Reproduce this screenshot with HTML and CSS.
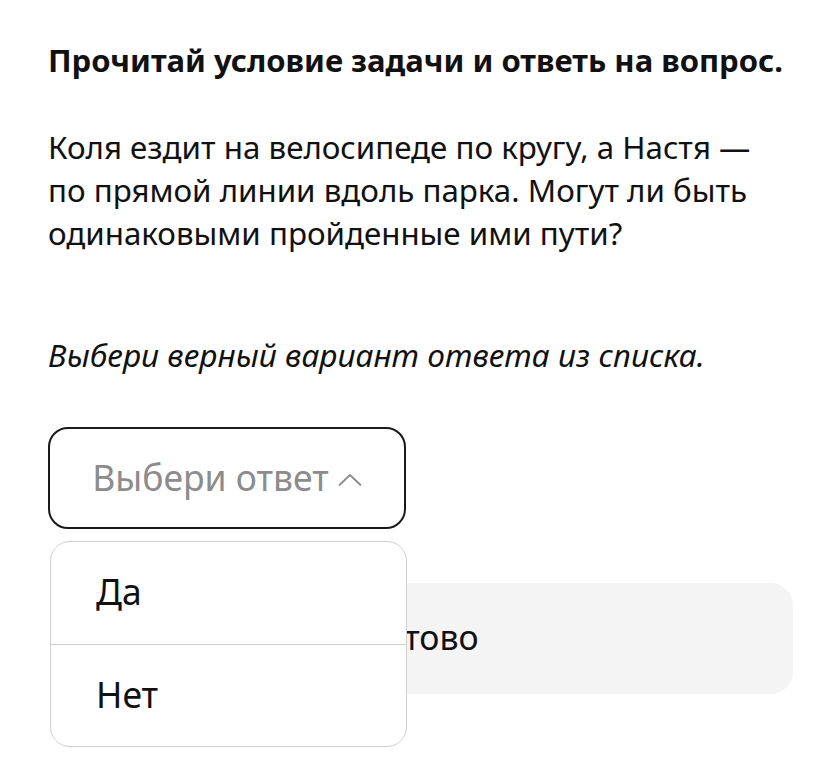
FILE: index.html
```html
<!DOCTYPE html>
<html lang="ru">
<head>
  <meta charset="UTF-8">
  <meta name="viewport" content="width=device-width, initial-scale=1.0">
  <title>Задача</title>
  <link rel="stylesheet" href="styles.css">
</head>
<body>
  <div class="task">
    <h1 class="task-title">Прочитай условие задачи и ответь на вопрос.</h1>

    <p class="task-text">Коля ездит на велосипеде по кругу, а Настя —<br>по прямой линии вдоль парка. Могут ли быть<br>одинаковыми пройденные ими пути?</p>

    <p class="task-hint">Выбери верный вариант ответа из списка.</p>

    <div class="answer">
      <div class="select-wrap">
        <button class="select-btn" type="button">
          <span class="select-label">Выбери ответ</span>
          <svg class="chevron" width="24" height="13" viewBox="0 0 24 13" fill="none">
            <path d="M1.5 12 L12 2 L22.5 12" stroke="#8c8c8c" stroke-width="1.8" stroke-linecap="round" stroke-linejoin="round"/>
          </svg>
        </button>

        <ul class="dropdown">
          <li class="dropdown-item">Да</li>
          <li class="dropdown-item">Нет</li>
        </ul>
      </div>

      <button class="done-btn" type="button">Готово</button>
    </div>
  </div>
</body>
</html>
```

FILE: styles.css
```css
* {
  box-sizing: border-box;
}

body {
  margin: 0;
  background: #fff;
  color: #111;
  font-family: "Noto Sans", "Open Sans", sans-serif;
}

.task {
  padding: 40px 32px 80px 48px;
}

.task-title {
  margin: 0;
  font-size: 31px;
  font-weight: 700;
  line-height: 40px;
}

.task-text {
  margin: 46px 0 0;
  font-size: 31.3px;
  line-height: 43px;
}

.task-hint {
  margin: 80px 0 0;
  font-size: 31.7px;
  font-style: italic;
  line-height: 40px;
}

.answer {
  margin-top: 52px;
}

.select-wrap {
  position: relative;
  width: 358px;
}

.select-btn {
  display: flex;
  align-items: center;
  justify-content: center;
  gap: 9px;
  width: 358px;
  height: 102px;
  padding: 0 0 2px;
  background: #fff;
  border: 2px solid #1a1a1a;
  border-radius: 20px;
  font-family: inherit;
  font-size: 35.5px;
  color: #8c8c8c;
  cursor: pointer;
}

.select-label {
  line-height: 44px;
}

.chevron {
  margin-top: 4px;
}

.dropdown {
  position: absolute;
  top: calc(100% + 12px);
  left: 2px;
  z-index: 10;
  width: 357px;
  margin: 0;
  padding: 0;
  list-style: none;
  background: #fff;
  border: 1px solid #cfcfcf;
  border-radius: 20px;
  overflow: hidden;
}

.dropdown-item {
  display: flex;
  align-items: center;
  height: 102px;
  padding: 0 0 4px 45px;
  font-size: 35.5px;
  color: #111;
}

.dropdown-item + .dropdown-item {
  border-top: 1px solid #cfcfcf;
}

.done-btn {
  display: block;
  width: 739px;
  height: 111px;
  margin: 54px 0 0 6px;
  padding: 0 0 4px;
  background: #f4f4f4;
  border: none;
  border-radius: 22px;
  font-family: inherit;
  font-size: 33.8px;
  color: #111;
  cursor: pointer;
}
```
